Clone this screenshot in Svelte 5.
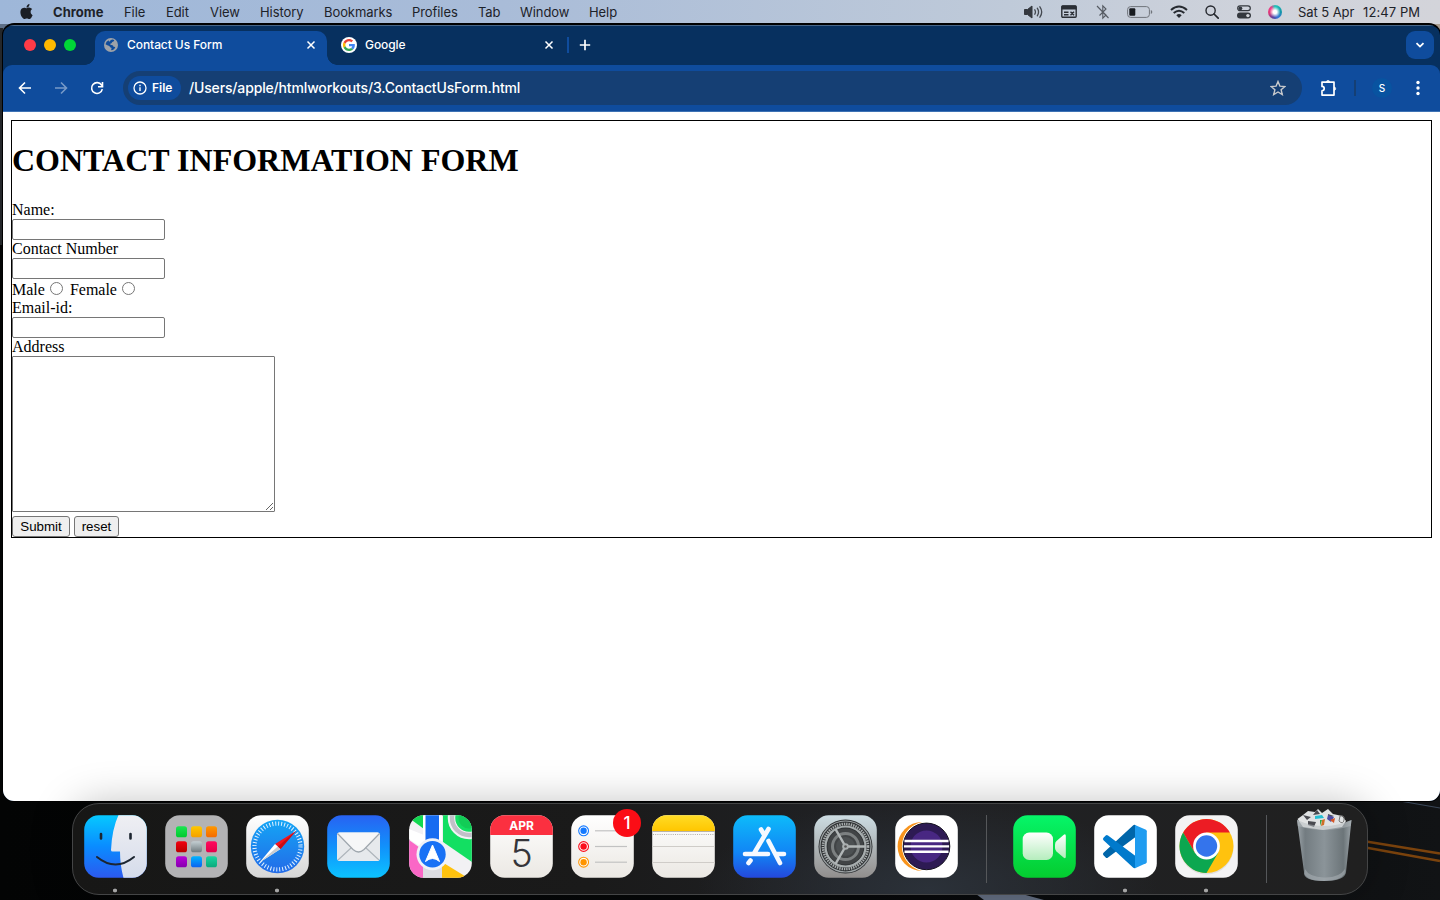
<script>
  const menus = [
    ['File', 42], ['Edit', 44], ['View', 50], ['History', 64], ['Bookmarks', 88],
    ['Profiles', 66], ['Tab', 42], ['Window', 69], ['Help', 40]
  ];
  const pads = [
    ['#1be552', '#00c92f'], ['#ffc800', '#f5a000'], ['#ff9800', '#f56a00'],
    ['#f20010', '#b90000'], ['#c3ced2', '#6f7a7e'], ['#ff0a5e', '#e4004a'],
    ['#b800d8', '#8600ae'], ['#00b4ff', '#0a62f0'], ['#17d7a0', '#0aa97c']
  ];
  const reminders = [['#1479ff', 15.8], ['#fb0d1b', 31.5], ['#ff9500', 47.2]];
</script>

<div class="desktop">
  <svg class="wallpaper" viewBox="0 0 1440 900">
    <defs>
      <linearGradient id="ground" x1="0" x2="1"><stop offset="0" stop-color="#030404" /><stop offset=".6" stop-color="#07090b" /><stop offset="1" stop-color="#111315" /></linearGradient>
    </defs>
    <rect width="1440" height="900" fill="url(#ground)" />
    <rect width="20" height="60" fill="#5d6f87" /><rect y="28" width="3" height="217" fill="#24272a" />
    <rect x="1420" y="20" width="20" height="30" fill="#a89c8f" />
    <path d="M976 894h46l22 6h-60z" fill="#657084" />
    <path d="M1400 801l40 7" fill="none" stroke="#3b4859" stroke-width="1.200" />
    <path d="M1360 840.500l80 13M1360 846.500l80 14.500" fill="none" stroke="#7b430d" stroke-width="2.600" />
  </svg>

  <header class="menubar">
    <svg class="apple" viewBox="0 0 24 24"><path fill="#1b1e24" d="M12.152 6.896c-.948 0-2.415-1.078-3.96-1.04-2.04.027-3.91 1.183-4.961 3.014-2.117 3.675-.546 9.103 1.519 12.09 1.013 1.454 2.208 3.09 3.792 3.039 1.52-.065 2.09-.987 3.935-.987 1.831 0 2.35.987 3.96.948 1.637-.026 2.676-1.48 3.676-2.948 1.156-1.688 1.636-3.325 1.662-3.415-.039-.013-3.182-1.221-3.22-4.857-.026-3.04 2.48-4.494 2.597-4.559-1.429-2.09-3.623-2.324-4.39-2.376-2-.156-3.675 1.09-4.61 1.09zM15.53 3.83c.843-1.012 1.4-2.427 1.245-3.83-1.207.052-2.662.805-3.532 1.818-.78.896-1.454 2.338-1.273 3.714 1.338.104 2.715-.688 3.559-1.701" /></svg>
    <b>Chrome</b>
    {#each menus as [name, width]}<span style:width="{width}px">{name}</span>{/each}
    <div class="status">
      <svg class="volume" width="20" height="16" viewBox="0 0 20 16" fill="none" stroke="#444950"><path d="M.5 5.500h3L8 2v12l-4.500-3.500h-3z" fill="#34383f" stroke="#34383f" stroke-linejoin="round" /><path d="M10.800 5.800q1.300 2.200 0 4.400M13.300 4.200q2.500 3.800 0 7.600M15.900 2.800q3.600 5.200 0 10.400" stroke-width="1.300" stroke-linecap="round" /></svg>
      <svg class="input-menu" width="16" height="16" viewBox="0 0 16 16"><path d="M1.500 1.500h13a1 1 0 0 1 1 1v3H.5v-3a1 1 0 0 1 1-1z" fill="#2b2f36" /><rect x=".8" y="2" width="14.400" height="11.300" rx="1" fill="none" stroke="#2b2f36" stroke-width="1.400" /><path d="M3 8.200h4.500M3 10.700h4.500M9.500 7.700l3.500 3.500M13 7.700l-3.500 3.500" stroke="#2b2f36" stroke-width="1.400" /></svg>
      <svg class="bluetooth" width="14" height="16" viewBox="0 0 14 16" fill="none" stroke="#555a62" stroke-width="1.100"><path d="M3.500 11.500L10 5 6.800 1.800v12.400L10 11 4 5.200M1 2l11.500 12" /></svg>
      <svg class="battery" width="26" height="14" viewBox="0 0 26 14"><rect x=".6" y="1.600" width="21.800" height="10.800" rx="3" fill="none" stroke="#70747b" /><rect x="2.300" y="3.200" width="6" height="7.600" rx="1" fill="#181b20" /><path d="M23.800 5v4q1.500-.5 1.500-2t-1.500-2z" fill="#70747b" /></svg>
      <svg class="wifi" width="18" height="14" viewBox="0 0 18 14" fill="none" stroke="#262a30" stroke-width="1.900"><path d="M1 5q8-7 16 0M3.700 8q5.300-4.700 10.600 0" /><path d="M6.300 10.200q2.700-2.300 5.400 0L9 13z" fill="#262a30" stroke="none" /></svg>
      <svg class="search" width="14" height="14" viewBox="0 0 14 14" fill="none" stroke="#24272d" stroke-width="1.400"><circle cx="5.600" cy="5.600" r="4.600" /><path d="M9 9l4.200 4.200" stroke-width="1.700" stroke-linecap="round" /></svg>
      <svg class="controls" width="14" height="14" viewBox="0 0 14 14"><rect x=".7" y=".9" width="12.600" height="4.800" rx="2.400" fill="none" stroke="#34383e" stroke-width="1.200" /><circle cx="3.400" cy="3.300" r="1.900" fill="#34383e" /><rect x="0" y="7.600" width="14" height="6" rx="3" fill="#34383e" /><circle cx="10.900" cy="10.600" r="1.700" fill="#d2d5da" /></svg>
      <span class="siri"></span>
      <span class="date">Sat 5 Apr</span><span class="time">12:47 PM</span>
    </div>
  </header>

  <main class="window">
    <div class="strip">
      <div class="lights"><i></i><i></i><i></i></div>
      <div class="tab active">
        <svg width="14" height="14" viewBox="0 0 14 14"><circle cx="7" cy="7" r="7" fill="#9ea2a8" /><path d="M6.600 2.300Q8.500 1 10.300 2.200 9.700 3.900 8.200 4 7.900 5.600 6.200 5.800 6 7 7.500 7 9.500 7.200 9.500 8.800L11.300 9Q10.500 12 7.400 12.300 6.700 11 7.700 9.900 5.800 9.800 5.300 8 3.300 7.600 1.500 6.300 2 3.200 4.800 2.200q-.3 1.200.5 1.500z" fill="#0f4b9b" /></svg>
        <span>Contact Us Form</span>
        <svg class="x" width="10" height="10" viewBox="0 0 10 10"><path d="M1.500 1.500l7 7m0-7l-7 7" /></svg>
      </div>
      <div class="tab second">
        <svg width="16" height="16" viewBox="0 0 16 16"><circle cx="8" cy="8" r="8" fill="#fff" /><g transform="translate(1.900 1.900) scale(.254)"><path fill="#EA4335" d="M24 9.500c3.540 0 6.710 1.220 9.210 3.600l6.850-6.850C35.900 2.380 30.470 0 24 0 14.620 0 6.510 5.380 2.560 13.220l7.980 6.190C12.430 13.720 17.740 9.500 24 9.500z" /><path fill="#4285F4" d="M46.980 24.550c0-1.570-.15-3.090-.38-4.550H24v9.020h12.940c-.58 2.960-2.260 5.480-4.780 7.180l7.730 6c4.510-4.180 7.090-10.360 7.090-17.650z" /><path fill="#FBBC05" d="M10.530 28.590c-.48-1.450-.76-2.990-.76-4.590s.27-3.140.76-4.590l-7.980-6.190C.92 16.460 0 20.120 0 24c0 3.880.92 7.540 2.560 10.780l7.970-6.190z" /><path fill="#34A853" d="M24 48c6.480 0 11.930-2.130 15.890-5.810l-7.730-6c-2.150 1.450-4.920 2.300-8.160 2.300-6.260 0-11.570-4.220-13.470-9.910l-7.980 6.190C6.510 42.620 14.620 48 24 48z" /></g></svg>
        <span>Google</span>
        <svg class="x" width="10" height="10" viewBox="0 0 10 10"><path d="M1.500 1.500l7 7m0-7l-7 7" /></svg>
      </div>
      <i class="tabsep"></i>
      <svg class="plus" width="12" height="12" viewBox="0 0 12 12"><path d="M6 .8v10.400M.8 6h10.400" stroke="#fff" stroke-width="1.700" /></svg>
      <button class="down" aria-label="Search tabs"><svg width="10" height="10" viewBox="0 0 10 10"><path d="M1.500 3.200L5 6.600l3.500-3.400" fill="none" stroke="#fff" stroke-width="1.800" /></svg></button>
    </div>

    <nav class="toolbar">
      <svg width="14" height="14" viewBox="0 0 14 14" class="line"><path d="M13 7H1.600M7 1.500L1.500 7 7 12.500" /></svg>
      <svg width="14" height="14" viewBox="0 0 14 14" class="line faded"><path d="M1 7h11.400M7 1.500L12.500 7 7 12.500" /></svg>
      <svg width="14" height="14" viewBox="0 0 14 14" class="line"><path d="M12.300 8.100A5.400 5.400 0 1 1 11.500 4L13 5.700M12.500 1v4.700H8" /></svg>
      <div class="omnibox">
        <div class="chip">
          <svg width="14" height="14" viewBox="0 0 14 14"><circle cx="7" cy="7" r="6" fill="none" stroke="#fff" stroke-width="1.300" /><path d="M7 6.300V10M7 3.800v1.400" stroke="#fff" stroke-width="1.400" /></svg>
          <span>File</span>
        </div>
        <span class="url">/Users/apple/htmlworkouts/3.ContactUsForm.html</span>
        <svg class="star" width="16" height="16" viewBox="0 0 16 16"><path d="M8 1.500l1.900 4.600 5 .4-3.800 3.200 1.200 4.900L8 12l-4.300 2.600 1.200-4.900L1.100 6.500l5-.4z" fill="none" stroke="#c7c9cc" stroke-width="1.400" /></svg>
      </div>
      <svg class="puzzle" width="18" height="18" viewBox="0 0 18 18"><path d="M2 3.100h12v13H2v-4.300a2.200 2.200 0 0 0 0-4.400z" fill="none" stroke="#fff" stroke-width="1.700" stroke-linejoin="round" /><path d="M6.300 2.800a1.800 1.800 0 0 1 3.500 0zM14.300 7.900a1.800 1.800 0 0 1 0 3.500z" fill="#fff" stroke="#fff" stroke-width=".6" /></svg>
      <i class="toolsep"></i>
      <span class="avatar">S</span>
      <svg class="dots" width="4" height="16" viewBox="0 0 4 16" fill="#fff"><circle cx="2" cy="2.500" r="1.700" /><circle cx="2" cy="8" r="1.700" /><circle cx="2" cy="13.500" r="1.700" /></svg>
    </nav>

    <section class="page">
      <form onsubmit={(e) => e.preventDefault()}>
        <h1>CONTACT INFORMATION FORM</h1>
        <label for="name">Name:</label>
        <input id="name" type="text" />
        <label for="number">Contact Number</label>
        <input id="number" type="text" />
        <div class="gender">Male<input type="radio" name="g" aria-label="Male" /> Female<input type="radio" name="g" aria-label="Female" /></div>
        <label for="email">Email-id:</label>
        <input id="email" type="text" />
        <label for="address">Address</label>
        <textarea id="address"></textarea>
        <div class="actions"><button class="submit">Submit</button><button class="reset" type="reset">reset</button></div>
      </form>
    </section>
  </main>

  <footer class="dock">
    <div class="slot running"><svg class="app" viewBox="0 0 63 63">
      <defs>
        <linearGradient id="fb" x2="0" y2="1"><stop stop-color="#06c9ff" /><stop offset=".5" stop-color="#0a8cff" /><stop offset="1" stop-color="#2c59ef" /></linearGradient>
        <linearGradient id="fw" x2="0" y2="1"><stop stop-color="#efeff3" /><stop offset="1" stop-color="#d5dceb" /></linearGradient>
        <clipPath id="tile"><rect x=".2" y=".2" width="62.600" height="62.600" rx="14.500" /></clipPath>
      </defs>
      <g clip-path="url(#tile)"><rect width="63" height="63" fill="url(#fb)" /><path d="M34.500 0Q28 14 27 35q0 1.500 1.500 1.500h7.500Q36 50 39.500 63H63V0z" fill="url(#fw)" /></g>
      <path d="M17 19v4.500M46.500 19v4.500" stroke="#1c2530" stroke-width="2.600" stroke-linecap="round" /><path d="M13 42q18.500 15 37 0" fill="none" stroke="#1c2530" stroke-width="2" stroke-linecap="round" />
    </svg></div>

    <div class="slot"><svg class="app" viewBox="0 0 63 63">
      <rect x=".2" y=".2" width="62.600" height="62.600" rx="14.500" fill="#b3b3b5" />
      {#each pads as [a, b], i}
        <linearGradient id="pad{i}" x2="0" y2="1"><stop stop-color={a} /><stop offset="1" stop-color={b} /></linearGradient>
        <rect x={11 + (i % 3) * 15} y={11.3 + Math.floor(i / 3) * 15} width="11" height="11" rx="2.600" fill="url(#pad{i})" />
      {/each}
    </svg></div>

    <div class="slot running"><svg class="app" viewBox="0 0 63 63">
      <defs><linearGradient id="sw" x2="0" y2="1"><stop stop-color="#fff" /><stop offset="1" stop-color="#d6d6d6" /></linearGradient><linearGradient id="sb" x2="0" y2="1"><stop stop-color="#14a5f5" /><stop offset="1" stop-color="#236be8" /></linearGradient></defs>
      <rect x=".2" y=".2" width="62.600" height="62.600" rx="14.500" fill="url(#sw)" />
      <circle cx="31.500" cy="31.500" r="26.700" fill="url(#sb)" />
      <circle cx="31.500" cy="31.500" r="23" fill="none" stroke="#e1f1ff" stroke-width="4.200" stroke-dasharray="1 2.011" />
      <path d="M50 16L29 29l5.500 5z" fill="#f3141e" /><path d="M13.500 47.500L29 29l5.500 5z" fill="#fff" /><path d="M13.500 47.500L34.500 34l-2.700-2.500z" fill="#c9ccd0" /><path d="M50 16L34.500 34l-2.700-2.500z" fill="#c90c14" />
    </svg></div>

    <div class="slot mail"><svg class="app" viewBox="0 0 63 63">
      <defs><linearGradient id="mb" x2="0" y2="1"><stop stop-color="#2862f2" /><stop offset=".5" stop-color="#1191fb" /><stop offset="1" stop-color="#0cc3ff" /></linearGradient></defs>
      <rect x=".2" y=".2" width="62.600" height="62.600" rx="14.500" fill="url(#mb)" />
      <rect x="10" y="17.500" width="43" height="28.500" rx="2.800" fill="#e6e9ec" /><path d="M11 45l13-12M52 45L39 33" stroke="#aeb5bb" stroke-width="1.100" />
      <path d="M10.500 18.500L26 34.500q5.500 5 11 0L52.500 18.500q-.5-1-2-1h-38q-1.500 0-2 1z" fill="#f6f7f8" /><path d="M10.500 18.500L26 34.500q5.500 5 11 0L52.500 18.500" fill="none" stroke="#9fa7ae" stroke-width="1.200" />
    </svg></div>

    <div class="slot"><svg class="app" viewBox="0 0 63 63">
      <g clip-path="url(#tile)">
        <rect width="63" height="63" fill="#f2f1f4" />
        <path d="M0 3l15 11V0H0z" fill="#13d951" /><path d="M34 0h29v47L34 27z" fill="#13df62" />
        <circle cx="60" cy="3" r="17.500" fill="none" stroke="#f2f2f5" stroke-width="7.500" /><circle cx="60" cy="3" r="17" fill="none" stroke="#c0c0c8" stroke-width="4.500" /><circle cx="60" cy="3" r="10.500" fill="#12cc56" />
        <path d="M0 25l14 10v28H0z" fill="#fa67c6" /><path d="M33 47l26 16H33z" fill="#ffc20e" /><path d="M0 14l15 6v14L0 24z" fill="#fff" />
        <path d="M14 50h19v13H14z" fill="#dcdce2" /><path d="M14 0h19v33H14z" fill="#fff" /><path d="M16.500 0H30v33H16.500z" fill="#176cf1" />
      </g>
      <circle cx="23.500" cy="39.200" r="16" fill="#f0f2f7" /><circle cx="23.500" cy="39.200" r="13.200" fill="#1971f5" /><path d="M23.500 30L30.500 46.500q-7-6-14 0z" fill="#fff" stroke="#fff" stroke-linejoin="round" />
    </svg></div>

    <div class="slot"><svg class="app" viewBox="0 0 63 63">
      <defs><linearGradient id="cal" x2="0" y2="1"><stop stop-color="#fff" /><stop offset="1" stop-color="#ebe8e3" /></linearGradient></defs>
      <g clip-path="url(#tile)"><rect width="63" height="63" fill="url(#cal)" /><rect width="63" height="20" fill="#fb3040" /></g>
      <text x="31.500" y="15.200" text-anchor="middle" font-family="Inter" font-weight="700" font-size="12" fill="#fff">APR</text>
      <text x="31.500" y="52.300" text-anchor="middle" font-family="Inter" font-weight="300" font-size="37.500" fill="#35353a">5</text>
    </svg></div>

    <div class="slot">
      <svg class="app" viewBox="0 0 63 63">
        <rect x=".2" y=".2" width="62.600" height="62.600" rx="14.500" fill="url(#cal)" />
        {#each reminders as [color, y]}
          <circle cx="12.600" cy={y} r="4.900" fill="#fff" stroke={color} stroke-width="1.100" /><circle cx="12.600" cy={y} r="3.200" fill={color} /><path d="M24 {y}h32" stroke="#c2c2c2" stroke-width="1.200" />
        {/each}
      </svg>
      <span class="badge">1</span>
    </div>

    <div class="slot"><svg class="app" viewBox="0 0 63 63">
      <defs><linearGradient id="ny" x2="0" y2="1"><stop stop-color="#ffdc27" /><stop offset="1" stop-color="#ffc600" /></linearGradient></defs>
      <g clip-path="url(#tile)"><rect width="63" height="63" fill="url(#cal)" /><rect width="63" height="16" fill="url(#ny)" /><path d="M0 16.500h63" stroke="#b8b2a6" stroke-width="1.200" /></g>
      <path d="M1 19.500h61" stroke="#b1aea9" stroke-dasharray="1 1.200" /><path d="M0 31.500h63M0 47.500h63" stroke="#cfccc8" />
    </svg></div>

    <div class="slot"><svg class="app" viewBox="0 0 63 63">
      <defs><linearGradient id="as" x2="0" y2="1"><stop stop-color="#0dbbfa" /><stop offset=".6" stop-color="#1185f5" /><stop offset="1" stop-color="#2448dc" /></linearGradient></defs>
      <rect x=".2" y=".2" width="62.600" height="62.600" rx="14.500" fill="url(#as)" />
      <path d="M28 14.500l3 5M35.500 14L21 38.500M35.500 26L47 48M12 39h23M43 39h8M17.500 45.500l-2 2.500" fill="none" stroke="#f5f9ff" stroke-width="4.600" stroke-linecap="round" />
    </svg></div>

    <div class="slot"><svg class="app" viewBox="0 0 63 63" fill="none">
      <defs><linearGradient id="gs" x2="0" y2="1"><stop stop-color="#cddde3" /><stop offset="1" stop-color="#918e8d" /></linearGradient></defs>
      <rect x=".2" y=".2" width="62.600" height="62.600" rx="14.500" fill="url(#gs)" />
      <circle cx="31.500" cy="31.500" r="27" fill="#303335" /><circle cx="31.500" cy="31.500" r="25.500" stroke="#9da3a5" stroke-width="1.200" />
      <circle cx="31.500" cy="31.500" r="22.500" stroke="#a8adae" stroke-width="2.600" stroke-dasharray="1.400 .956" /><circle cx="31.500" cy="31.500" r="20" stroke="#a7adae" stroke-width="2.200" />
      <circle cx="31.500" cy="31.500" r="18" fill="#414446" /><circle cx="31.500" cy="31.500" r="13" stroke="#7c8081" stroke-width="3" /><circle cx="31.500" cy="31.500" r="9.500" fill="#4c5052" />
      <path d="M31.500 31.500h20M31.500 31.500l-10-17.300M31.500 31.500l-10 17.300" stroke="#b1b6b7" stroke-width="2.400" /><circle cx="31.500" cy="31.500" r="3.300" fill="#a9aeaf" /><circle cx="31.500" cy="31.500" r="1.300" fill="#555" />
    </svg></div>

    <div class="slot"><svg class="app" viewBox="0 0 63 63">
      <rect x=".2" y=".2" width="62.600" height="62.600" rx="14.500" fill="#fff" />
      <circle cx="27" cy="31.400" r="24.400" fill="#f8941d" /><circle cx="31.800" cy="31.400" r="24.900" fill="#fff" />
      <circle cx="31.500" cy="31.400" r="23.300" fill="#2d1a53" stroke="#16131f" /><circle cx="31.500" cy="31.400" r="16" fill="#482782" />
      <path d="M9.500 26h44M9 31.400h45M9.500 36.800h44" stroke="#fff" stroke-width="2.400" />
    </svg></div>

    <i class="divider"></i>

    <div class="slot"><svg class="app" viewBox="0 0 63 63">
      <defs><linearGradient id="ft" x2="0" y2="1"><stop stop-color="#06f569" /><stop offset="1" stop-color="#04cc2f" /></linearGradient><linearGradient id="cam" x2="0" y2="1"><stop stop-color="#fff" /><stop offset="1" stop-color="#b5edbd" /></linearGradient></defs>
      <rect x=".2" y=".2" width="62.600" height="62.600" rx="14.500" fill="url(#ft)" />
      <rect x="9.700" y="17.500" width="30.300" height="27.500" rx="6.500" fill="url(#cam)" /><path d="M42 29.500q0-2 1.500-3.400l7-6.200q2.300-1.500 2.300 1v20.700q0 2.500-2.300 1l-7-6.200Q42 35 42 33z" fill="url(#cam)" />
    </svg></div>

    <div class="slot running"><svg class="app" viewBox="0 0 63 63">
      <rect x=".2" y=".2" width="62.600" height="62.600" rx="14.500" fill="#fff" />
      <path d="M41.500 10v12L14 42.500q-1.200 1-2.300 0L9.500 40.300q-1.200-1.300 0-2.500L39 10.500q1-1 2.500-.5z" fill="#0065a9" />
      <path d="M41.500 53V41L14 20.500q-1.200-1-2.300 0l-2.200 2.200q-1.200 1.300 0 2.500L39 52.500q1 1 2.500.5z" fill="#007acc" />
      <path d="M41 10l11 4.800q.8.500.8 1.500v30.400q0 1-.8 1.500L41 53.200z" fill="#1f9cf0" />
    </svg></div>

    <div class="slot running"><svg class="app" viewBox="0 0 63 63">
      <rect x=".2" y=".2" width="62.600" height="62.600" rx="14.500" fill="#f3f3f4" /><circle cx="31.500" cy="32.500" r="27" fill="#bbb" opacity=".35" />
      <circle cx="31.500" cy="31" r="27" fill="#ffc20e" />
      <path d="M8.120 17.500A27 27 0 0 1 54.880 17.500H31.500L19.810 37.750z" fill="#ec1c24" />
      <path d="M8.120 17.500A27 27 0 0 0 31.500 58L43.190 37.750 31.500 31 19.810 37.750z" fill="#0ca750" />
      <circle cx="31.500" cy="31" r="13.400" fill="#fff" /><circle cx="31.500" cy="31" r="10.700" fill="#3474ec" />
    </svg></div>

    <i class="divider"></i>

    <svg class="trash" viewBox="0 0 63 76">
      <defs><linearGradient id="bin"><stop stop-color="#9ca4a9" /><stop offset=".15" stop-color="#737c81" /><stop offset=".5" stop-color="#8b9499" /><stop offset=".85" stop-color="#6c7579" /><stop offset="1" stop-color="#9ba3a8" /></linearGradient></defs>
      <path d="M4 13q27 12 54.500 0L53 65q-1 9-22 9T11 65z" fill="url(#bin)" />
      <path d="M12 62q4 8 19 8.500T52 62l-.4 5Q47 74 31 74t-19.500-7z" fill="#a6aeb3" opacity=".6" />
      <path d="M4.500 12L10 8l5-4 7 1 3-3 4 4 6-4 5 5 9 2 4 5-4 6-19 3-20-3z" fill="#e0e2e3" />
      <path d="M10 8l8 2-4 3zM24 3l3 4-7 1zM15 14l8 1-2 5-6-2zM35 7l6 2-6 2z" fill="#494a50" /><path d="M22 9l7-1 2 3-9 1z" fill="#25bfd3" /><path d="M35 8l6 2-3 5-4-3z" fill="#4c4ca3" /><path d="M37 13l5-2-1 5z" fill="#d65524" /><path d="M29 13l3-1-1 6-3 1z" fill="#ce6f27" /><path d="M27 13l2 0-2 6z" fill="#32a64c" /><path d="M47 9q5-1 4 4t-5 1z" fill="none" stroke="#777" />
      <path d="M4 13q27 12 54.500 0l-.8 6Q31 27 4.800 19z" fill="#b3babe" opacity=".5" />
    </svg>
  </footer>
</div>

<style>
  :global(body) { background: #000; overflow: hidden; }
  .desktop { position: relative; width: 1440px; height: 900px; overflow: hidden; font-family: Inter, sans-serif; }
  svg { display: block; flex: none; }
  .wallpaper { position: absolute; inset: 0; width: 1440px; height: 900px; }

  .menubar { position: relative; display: flex; align-items: center; box-sizing: border-box; height: 24px; padding: 0 0 1px 19px; background: linear-gradient(90deg, #9eb7d9, #a9bcd8 35%, #bfcad9 70%, #d0d3db 88%, #d3d4da); font-size: 13px; letter-spacing: -.08px; color: #1d2229; white-space: nowrap; }
  .apple { width: 15px; height: 15px; margin: -1px 19px 0 0; }
  .menubar b { width: 71px; font-weight: 700; letter-spacing: .05px; }
  .status { display: flex; align-items: center; margin-left: auto; padding-right: 19px; }
  .status svg { margin-top: 1px; }
  .input-menu { margin-left: 17px; }
  .bluetooth { margin-left: 19px; }
  .battery { margin-left: 17px; }
  .wifi, .search { margin-left: 17px; }
  .controls { margin-left: 18px; }
  .siri { width: 14px; height: 14px; margin: 1px 16px 0 17px; border-radius: 50%; background: radial-gradient(circle, #fff 0 18%, transparent 55%), conic-gradient(#20c7bc, #1396a8 90deg, #3777d8 150deg, #5844a0 200deg, #e03978 260deg, #ef3d88 320deg, #20c7bc); }
  .date { width: 65px; }
  .time { width: 58px; letter-spacing: .1px; }

  .window { position: relative; box-sizing: border-box; width: 1437px; height: 777px; margin-left: 3px; border-top: 1px solid #000; border-radius: 11px; overflow: hidden; background: #07305f; box-shadow: 0 0 0 1px #000; }
  .strip { display: flex; align-items: center; height: 40px; box-shadow: inset 0 1px #466587; color: #fff; font-size: 12px; font-weight: 500; }
  .lights { display: flex; gap: 8px; width: 71px; padding-left: 21px; }
  .lights i { width: 12px; height: 12px; border-radius: 50%; background: #ff3b47; }
  .lights i:nth-child(2) { background: #ffb900; }
  .lights i:nth-child(3) { background: #00d637; }
  .tab { display: flex; align-items: center; box-sizing: border-box; }
  .tab span { padding-bottom: 2px; letter-spacing: -.07px; }
  .tab .x { margin-left: auto; }
  .x path { stroke: #fff; stroke-width: 1.5; }
  .active { position: relative; align-self: flex-end; width: 232px; height: 34px; padding: 0 11px 6px 9px; border-radius: 10px 10px 0 0; background: #0f4c9d; }
  .active span { margin-left: 9px; }
  .active::before, .active::after { content: ''; position: absolute; bottom: 0; width: 10px; height: 10px; }
  .active::before { left: -10px; background: radial-gradient(circle at 0 0, transparent 9.5px, #0f4c9d 10px); }
  .active::after { right: -10px; background: radial-gradient(circle at 100% 0, transparent 9.5px, #0f4c9d 10px); }
  .second { width: 240px; padding: 0 13px 0 14px; }
  .second span { margin-left: 8px; }
  .tabsep { width: 2px; height: 16px; background: #0f4c9d; }
  .plus { margin-left: 10px; }
  .down { display: flex; align-items: center; justify-content: center; width: 28px; height: 28px; margin: 0 6px 0 auto; padding: 0; border: 0; border-radius: 9px; background: #0f4c9d; }

  .toolbar { display: flex; align-items: center; box-sizing: border-box; height: 47px; padding-left: 15px; border-bottom: 1px solid #3d72b4; border-radius: 9px 9px 0 0; background: #0f4c9d; color: #fff; }
  .line { margin-right: 22px; fill: none; stroke: #fff; stroke-width: 1.6; }
  .faded { opacity: .43; }
  .omnibox { display: flex; align-items: center; box-sizing: border-box; width: 1179px; height: 34px; margin-left: -3px; padding: 0 16px 0 5px; border-radius: 17px; background: #153f74; }
  .chip { display: flex; align-items: center; box-sizing: border-box; width: 53px; height: 24px; padding-left: 5px; border-radius: 12px; background: #0f4c9d; font-size: 12px; font-weight: 600; }
  .chip span { margin-left: 5px; padding-bottom: 1px; }
  .url { margin-left: 8px; padding-bottom: 2px; font-size: 14px; font-weight: 500; letter-spacing: -.155px; }
  .star { margin-left: auto; }
  .puzzle { margin-left: 18px; }
  .toolsep { width: 2px; height: 16px; margin-left: 16px; background: #153f74; }
  .avatar { width: 20px; height: 20px; margin-left: 16px; border-radius: 50%; background: #0853a0; font-size: 10px; font-weight: 500; line-height: 20px; text-align: center; }
  .dots { margin-left: 24px; }

  .page { box-sizing: border-box; height: 689px; padding: 8px; background: #fff; font: 16px/18px "Liberation Serif", serif; color: #000; }
  form { box-sizing: border-box; width: 1421px; height: 418px; border: 1px solid #000; }
  h1 { margin: 21px 0 22px; font-size: 32px; line-height: 37px; }
  label { display: block; height: 18px; }
  input[type='text'] { display: block; box-sizing: border-box; width: 153px; height: 21px; margin: 0; border: 1px solid #767676; border-radius: 2px; }
  .gender { height: 20px; line-height: 21px; }
  .gender input { width: 13px; height: 13px; margin: 3px 3px 0 5px; }
  textarea { display: block; box-sizing: border-box; width: 263px; height: 156px; margin: 0; border: 1px solid #767676; border-radius: 1px; resize: both; }
  .actions { display: flex; gap: 4px; margin-top: 4px; }
  .actions button { box-sizing: border-box; height: 21px; padding: 0; border: 1px solid #767676; border-radius: 3px; background: #efefef; color: #000; font: 13.333px/17px "Liberation Sans", sans-serif; }
  .submit { width: 58px; }
  .reset { width: 45px; }

  .dock { position: absolute; left: 72px; top: 803px; display: flex; box-sizing: border-box; width: 1296px; height: 92px; padding: 11px 0 0 11px; border: 1px solid #444546; border-radius: 27px; background: radial-gradient(ellipse 230px 90px at 855px 85px, #2b3139, transparent), linear-gradient(90deg, #171716, #1a1a1a 40%, #202124 60%, #202020); box-shadow: 0 0 40px rgba(0, 0, 0, .25); }
  .slot { position: relative; flex: none; width: 63px; height: 78px; margin-right: 18px; }
  .mail { margin-right: 19px; }
  .app { width: 63px; height: 63px; }
  .running { background: radial-gradient(circle at 31px 75.5px, #a5a5a5 0 1.7px, transparent 2.2px); }
  .badge { position: absolute; left: 42px; top: -6px; width: 28px; height: 28px; border-radius: 50%; background: #fb0d16; color: #fff; font-size: 17px; font-weight: 500; line-height: 28px; text-align: center; }
  .divider { width: 1px; height: 68px; margin: 0 26px 0 10px; background: #55575a; }
  .trash { width: 63px; height: 76px; margin-top: -8px; }
</style>
